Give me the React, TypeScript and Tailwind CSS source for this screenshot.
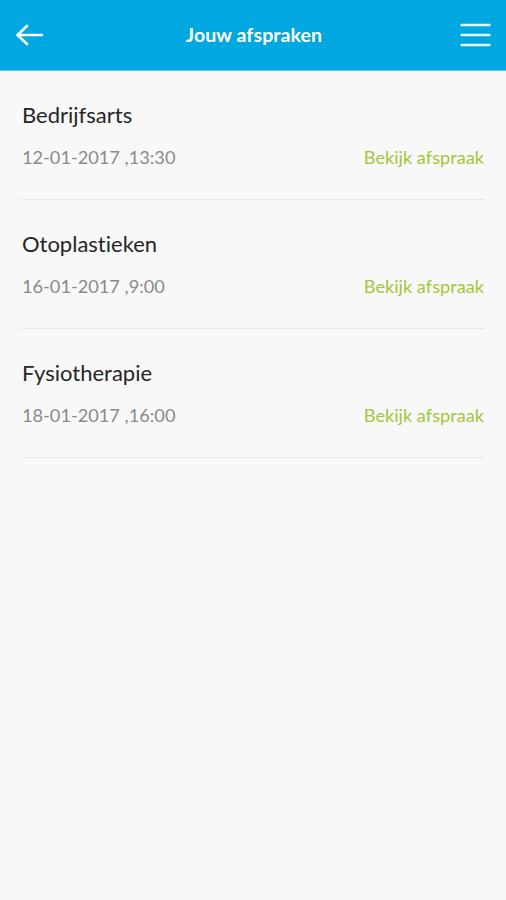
const afspraken = [
  { naam: "Bedrijfsarts", datum: "12-01-2017 ,13:30" },
  { naam: "Otoplastieken", datum: "16-01-2017 ,9:00" },
  { naam: "Fysiotherapie", datum: "18-01-2017 ,16:00" },
];

export default function App() {
  return (
    <div className="min-h-[900px] bg-[#f8f8f8] font-['Lato','Noto_Sans',sans-serif] [font-variant-ligatures:none]">
      {/* Header */}
      <header className="h-[71px] bg-[#00a7e1] flex items-center justify-between px-[15px] border-b border-[#6cc9ee]">
        <svg width="29" height="22" viewBox="0 0 29 22" fill="none" stroke="white" strokeWidth="2.6" strokeLinecap="round" strokeLinejoin="round">
          <path d="M27 11H3" />
          <path d="M12 2L2.5 11L12 20" />
        </svg>
        <h1 className="text-white font-bold text-[19.5px] tracking-[0.1px] ml-[4px]">Jouw afspraken</h1>
        <svg width="31" height="24" viewBox="0 0 31 24" stroke="#e9f7fd" strokeWidth="2.4" strokeLinecap="round">
          <path d="M1.5 2h28" />
          <path d="M1.5 12h28" />
          <path d="M1.5 22h28" />
        </svg>
      </header>

      {/* Lijst */}
      <div className="px-[22px]">
        {afspraken.map((a) => (
          <div key={a.naam} className="pt-[32px] pb-[32px] border-b border-[#e6e6e6]">
            <div className="text-[22px] leading-[24px] text-[#262626]">{a.naam}</div>
            <div className="mt-[20px] flex items-center justify-between text-[18.2px] leading-[20px]">
              <span className="text-[#8a8a8a]">{a.datum}</span>
              <span className="text-[#a5c63b]">Bekijk afspraak</span>
            </div>
          </div>
        ))}
      </div>
    </div>
  );
}
